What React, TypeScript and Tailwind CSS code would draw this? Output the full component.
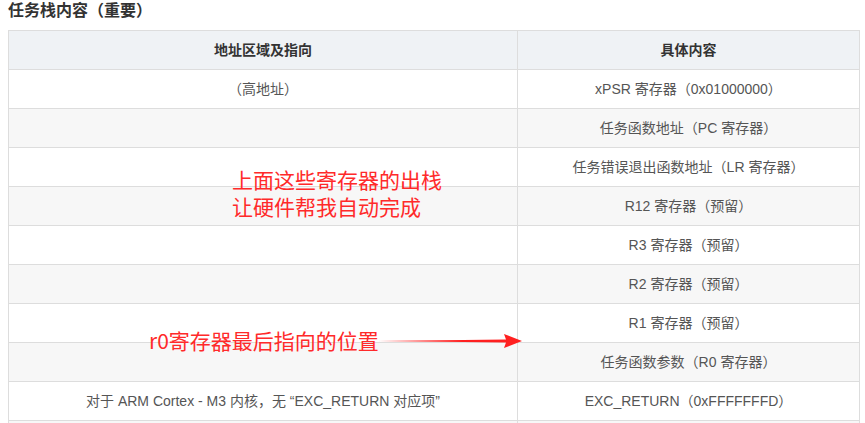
import React from "react";

const rows: [string, string][] = [
  ["（高地址）", "xPSR 寄存器（0x01000000）"],
  ["", "任务函数地址（PC 寄存器）"],
  ["", "任务错误退出函数地址（LR 寄存器）"],
  ["", "R12 寄存器（预留）"],
  ["", "R3 寄存器（预留）"],
  ["", "R2 寄存器（预留）"],
  ["", "R1 寄存器（预留）"],
  ["", "任务函数参数（R0 寄存器）"],
  ["对于 ARM Cortex - M3 内核，无 “EXC_RETURN 对应项”", "EXC_RETURN（0xFFFFFFFD）"],
  ["", ""],
];

export default function App() {
  const font = { fontFamily: '"Liberation Sans", "Noto Sans CJK SC", sans-serif' };
  return (
    <div className="relative w-[865px] h-[423px] overflow-hidden bg-white" style={font}>
      <div className="pl-2 pt-[1px] h-[30px] text-[16px] font-bold text-[#333] leading-[20px]">
        任务栈内容（重要）
      </div>
      <table className="ml-2 w-[852px] border-collapse text-[14px] text-[#555]">
        <thead>
          <tr className="bg-[#eff2f5]">
            <th className="h-[39px] w-[509px] border border-[#dddddd] font-bold text-[#333] p-0">地址区域及指向</th>
            <th className="h-[39px] border border-[#dddddd] font-bold text-[#333] p-0">具体内容</th>
          </tr>
        </thead>
        <tbody>
          {rows.map((r, i) => (
            <tr key={i} className={i % 2 === 1 ? "bg-[#f7f7f7]" : "bg-white"}>
              <td className="h-[39px] border border-[#dddddd] text-center p-0">{r[0]}</td>
              <td className="h-[39px] border border-[#dddddd] text-center p-0">{r[1]}</td>
            </tr>
          ))}
        </tbody>
      </table>

      <div className="absolute left-[232px] top-[166px] text-[21px] leading-[27px] text-[#ff2a2a]" style={{ fontFamily: '"Noto Sans CJK SC", sans-serif' }}>
        <div>上面这些寄存器的出栈</div>
        <div>让硬件帮我自动完成</div>
      </div>

      <div className="absolute left-[149px] top-[327px] text-[21px] leading-[27px] text-[#ff2a2a]" style={{ fontFamily: '"Noto Sans CJK SC", sans-serif' }}>
        r0寄存器最后指向的位置
      </div>

      <svg className="absolute left-[378px] top-[331px]" width="148" height="20" viewBox="0 0 148 20">
        <polygon points="0,10 128,8.5 126,3 144,10 126,17 128,11.5" fill="#ff2020" />
      </svg>
    </div>
  );
}
